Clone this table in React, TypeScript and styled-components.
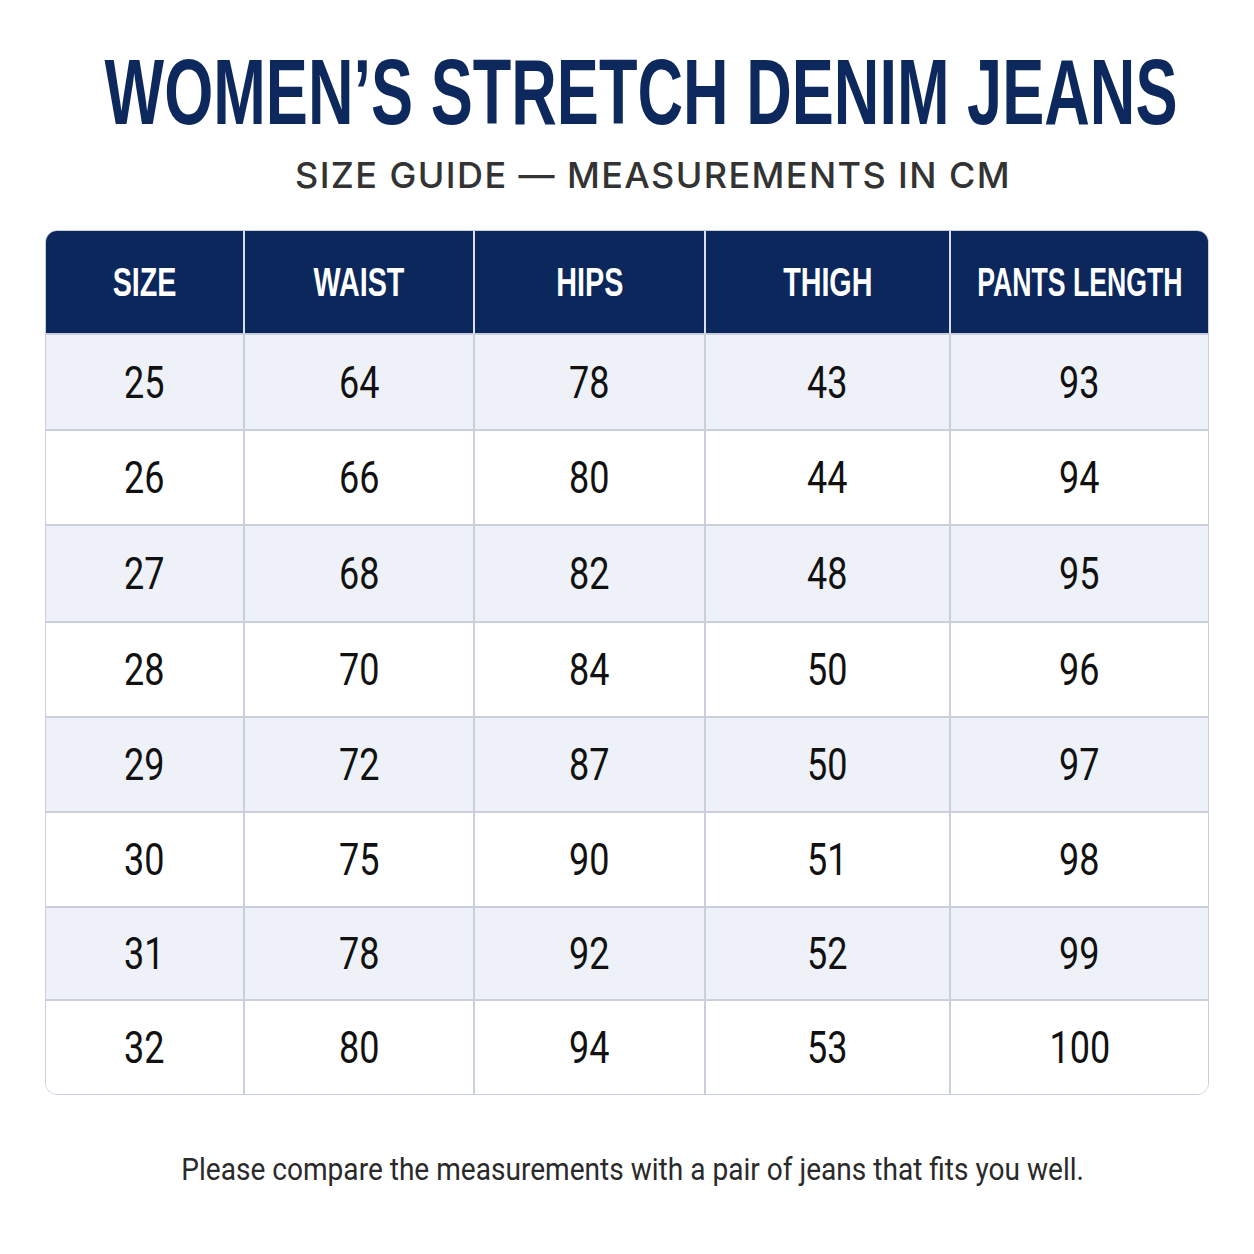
import React from "react";
import styled, { createGlobalStyle } from "styled-components";

const Global = createGlobalStyle`
  html, body { margin: 0; padding: 0; background: #ffffff; }
  body { width: 1254px; height: 1254px; overflow: hidden; }
`;

const Page = styled.div`
  width: 1254px;
  height: 1254px;
  box-sizing: border-box;
  padding: 44px 45px 0;
  display: flex;
  flex-direction: column;
  align-items: center;
  background: #ffffff;
`;

const Squeeze = styled.span<{ $sx: number }>`
  display: inline-block;
  white-space: nowrap;
  transform: scaleX(${(p) => p.$sx});
  transform-origin: center;
`;

const Title = styled.h1`
  margin: 0 0 0 28px;
  width: 100%;
  display: flex;
  justify-content: center;
  font-family: "Liberation Sans", Arial, sans-serif;
  font-weight: 700;
  font-size: 92px;
  line-height: 96px;
  color: #0c285c;
`;

const Subtitle = styled.h2`
  margin: 13px 0 0 52px;
  font-family: Inter, "Liberation Sans", sans-serif;
  font-weight: 500;
  font-size: 36px;
  line-height: 44px;
  letter-spacing: 1.4px;
  color: #333333;
  white-space: nowrap;
`;

const Table = styled.div`
  margin-top: 33px;
  width: 1164px;
  display: grid;
  grid-template-columns: 199px 230px 231px 245px minmax(0, 1fr);
  border: 1px solid #c9cfdc;
  border-radius: 12px;
  overflow: hidden;
  box-sizing: border-box;
`;

const HeadCell = styled.div<{ $last?: boolean }>`
  min-width: 0;
  height: 102px;
  display: flex;
  align-items: center;
  justify-content: center;
  background: #0b275c;
  color: #ffffff;
  font-family: "Liberation Sans", Arial, sans-serif;
  font-weight: 700;
  font-size: 41px;
  border-right: ${(p) => (p.$last ? "none" : "2px solid #d9deea")};
  box-sizing: border-box;
`;

const Cell = styled.div<{ $alt: boolean; $last?: boolean; $h: number }>`
  min-width: 0;
  height: ${(p) => p.$h}px;
  display: flex;
  align-items: center;
  justify-content: center;
  background: ${(p) => (p.$alt ? "#eef1f8" : "#ffffff")};
  color: #111111;
  font-family: Roboto, "Liberation Sans", sans-serif;
  font-weight: 400;
  font-size: 45px;
  border-right: ${(p) => (p.$last ? "none" : "2px solid #c9cfdc")};
  border-top: 2px solid #c9cfdc;
  box-sizing: border-box;
`;

const Note = styled.p`
  margin: 55px 0 0 12px;
  width: 100%;
  display: flex;
  justify-content: center;
  font-family: Roboto, "Liberation Sans", sans-serif;
  font-size: 32px;
  color: #2a2a2a;
`;

const headers = ["SIZE", "WAIST", "HIPS", "THIGH", "PANTS LENGTH"];
const rows = [
  ["25", "64", "78", "43", "93"],
  ["26", "66", "80", "44", "94"],
  ["27", "68", "82", "48", "95"],
  ["28", "70", "84", "50", "96"],
  ["29", "72", "87", "50", "97"],
  ["30", "75", "90", "51", "98"],
  ["31", "78", "92", "52", "99"],
  ["32", "80", "94", "53", "100"],
];
const heights = [96, 95, 97, 95, 95, 95, 93, 95];

export default function App() {
  return (
    <>
      <Global />
      <Page>
        <Title>
          <Squeeze $sx={0.686}>WOMEN’S STRETCH DENIM JEANS</Squeeze>
        </Title>
        <Subtitle>SIZE GUIDE — MEASUREMENTS IN CM</Subtitle>
        <Table>
          {headers.map((h, i) => (
            <HeadCell key={h} $last={i === headers.length - 1}>
              <Squeeze $sx={i === headers.length - 1 ? 0.65 : 0.7}>{h}</Squeeze>
            </HeadCell>
          ))}
          {rows.map((r, ri) =>
            r.map((v, ci) => (
              <Cell
                key={`${ri}-${ci}`}
                $alt={ri % 2 === 0}
                $last={ci === r.length - 1}
                $h={heights[ri]}
              >
                <Squeeze $sx={0.8}>{v}</Squeeze>
              </Cell>
            ))
          )}
        </Table>
        <Note>
          <Squeeze $sx={0.877}>
            Please compare the measurements with a pair of jeans that fits you well.
          </Squeeze>
        </Note>
      </Page>
    </>
  );
}
